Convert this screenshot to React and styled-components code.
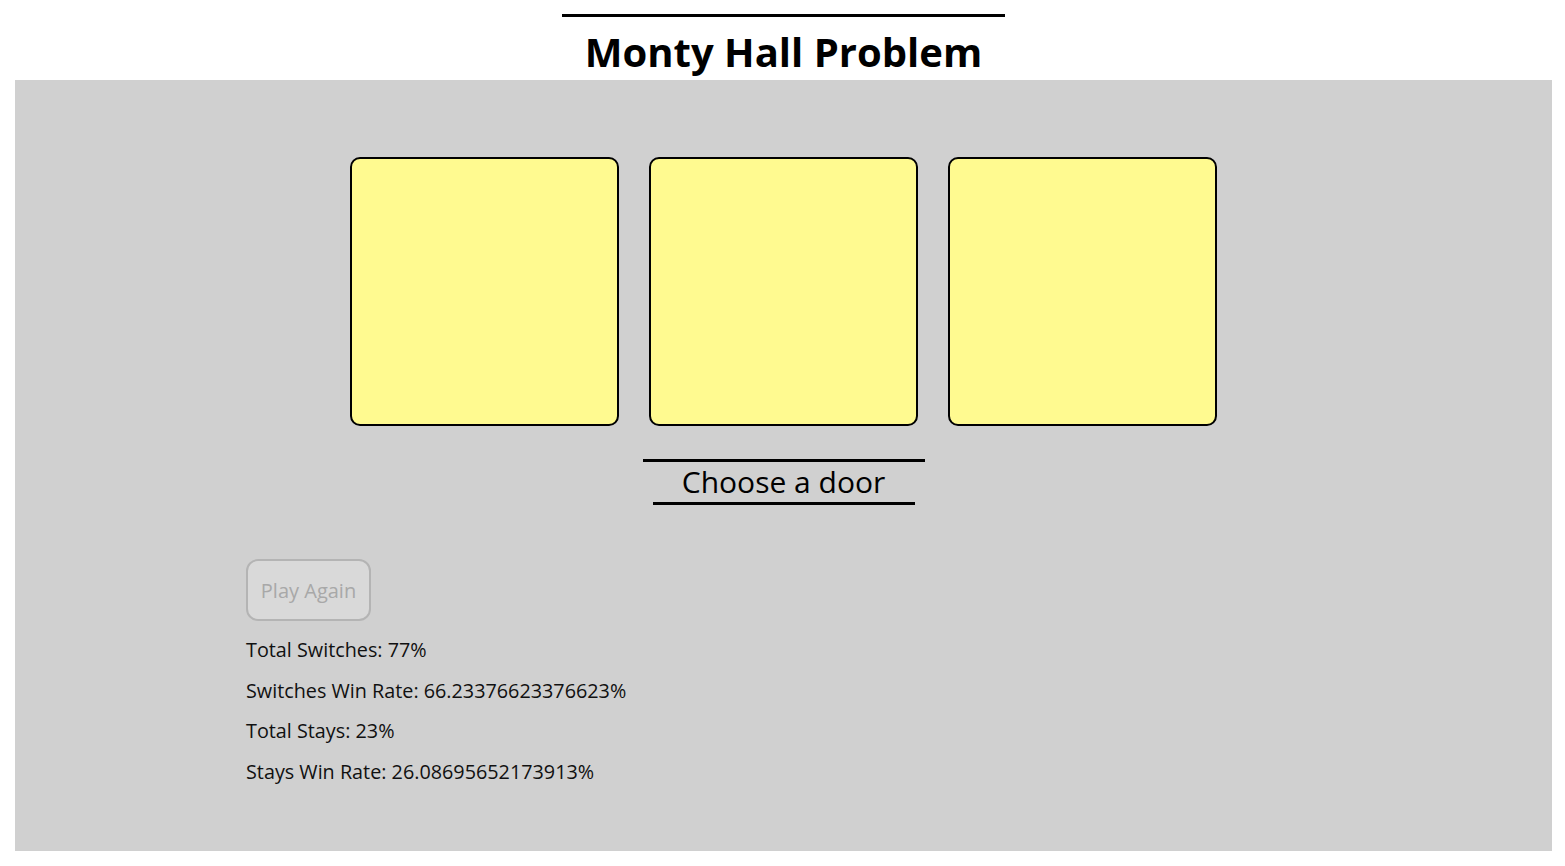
import React from "react";
import styled, { createGlobalStyle } from "styled-components";

const Global = createGlobalStyle`
  html, body { margin: 0; padding: 0; background: #ffffff; }
  body { font-family: "Open Sans", "Noto Sans", sans-serif; color: #000; }
`;

const Page = styled.div`
  display: flex;
  flex-direction: column;
  align-items: stretch;
  padding: 0 13px 15px 15px;
`;

const Header = styled.header`
  display: flex;
  justify-content: center;
  padding-top: 14px;
`;

const Title = styled.h1`
  margin: 0;
  width: 443px;
  border-top: 3px solid #000;
  text-align: center;
  font-size: 40px;
  font-weight: 700;
  line-height: 62px;
  height: 59px;
  padding-top: 4px;
  overflow: visible;
  white-space: nowrap;
`;

const Stage = styled.main`
  background: #d0d0d0;
  height: 771px;
  display: flex;
  flex-direction: column;
  align-items: center;
  padding-top: 77px;
  box-sizing: border-box;
`;

const DoorRow = styled.div`
  display: flex;
  gap: 30px;
`;

const Door = styled.button`
  width: 269px;
  height: 269px;
  box-sizing: border-box;
  border: 2px solid #000;
  border-radius: 10px;
  background: #fffa90;
  padding: 0;
  cursor: pointer;
`;

const Prompt = styled.div`
  margin-top: 33px;
  display: flex;
  flex-direction: column;
  align-items: center;
`;

const PromptText = styled.div`
  width: 282px;
  border-top: 3px solid #000;
  text-align: center;
  font-size: 30px;
  font-weight: 400;
  line-height: 40px;
  white-space: nowrap;
`;

const PromptRule = styled.div`
  width: 262px;
  height: 3px;
  background: #000;
`;

const Panel = styled.section`
  align-self: flex-start;
  margin-left: 231px;
  margin-top: 54px;
  display: flex;
  flex-direction: column;
  align-items: flex-start;
`;

const PlayButton = styled.button`
  font-family: inherit;
  font-size: 20px;
  color: #a8a8a8;
  background: #d9d9d9;
  border: 2px solid #b4b4b4;
  border-radius: 12px;
  width: 125px;
  height: 62px;
  padding: 0;
`;

const Stat = styled.p`
  margin: 0;
  font-size: 19.8px;
  line-height: 40.7px;
  color: #111;
  white-space: nowrap;
  &:first-of-type { margin-top: 9px; }
`;

export default function App() {
  const stats = [
    "Total Switches: 77%",
    "Switches Win Rate: 66.23376623376623%",
    "Total Stays: 23%",
    "Stays Win Rate: 26.08695652173913%",
  ];
  return (
    <>
      <Global />
      <Page>
        <Header>
          <Title>Monty Hall Problem</Title>
        </Header>
        <Stage>
          <DoorRow>
            <Door aria-label="Door 1" />
            <Door aria-label="Door 2" />
            <Door aria-label="Door 3" />
          </DoorRow>
          <Prompt>
            <PromptText>Choose a door</PromptText>
            <PromptRule />
          </Prompt>
          <Panel>
            <PlayButton disabled>Play Again</PlayButton>
            {stats.map((s) => (
              <Stat key={s}>{s}</Stat>
            ))}
          </Panel>
        </Stage>
      </Page>
    </>
  );
}
